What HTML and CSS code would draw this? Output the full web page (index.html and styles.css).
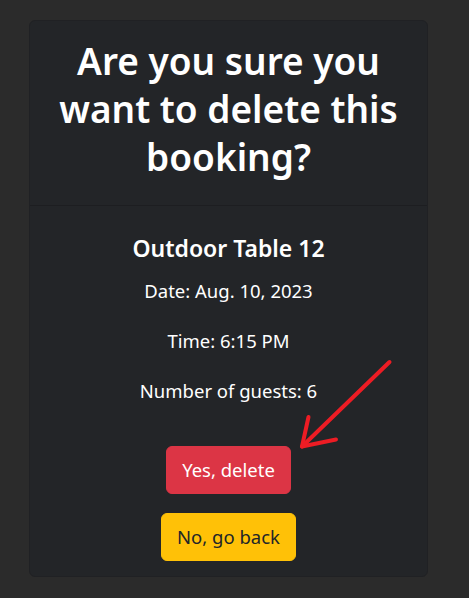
FILE: index.html
```html
<!DOCTYPE html>
<html lang="en">
<head>
<meta charset="utf-8">
<title>Delete booking</title>
<link rel="stylesheet" href="styles.css">
</head>
<body>
<div class="card">
  <div class="card-header">
    <h1 class="title">Are you sure you want to delete this booking?</h1>
  </div>
  <div class="card-body">
    <h4 class="table-name">Outdoor Table 12</h4>
    <p class="info">Date: Aug. 10, 2023</p>
    <p class="info">Time: 6:15 PM</p>
    <p class="info">Number of guests: 6</p>
    <div class="actions">
      <button class="btn btn-danger">Yes, delete</button>
      <button class="btn btn-warning">No, go back</button>
    </div>
  </div>
</div>
<svg class="arrow" width="469" height="598" viewBox="0 0 469 598">
  <g fill="none" stroke="#ed1c24" stroke-width="4" stroke-linecap="round" stroke-linejoin="round">
    <path d="M389.5 362 L302 446.5"/>
    <path d="M308.5 417 L302 446.5 L336 439.5"/>
  </g>
</svg>
</body>
</html>
```
FILE: styles.css
```css
html, body {
  margin: 0;
  padding: 0;
}
body {
  background: #2b2b2b;
  font-family: "Noto Sans", "Open Sans", sans-serif;
  color: #fff;
  padding-top: 20px;
  height: 578px;
  overflow: hidden;
}
.card {
  margin-left: 29px;
  width: 399px;
  background: #232528;
  border: 1px solid #202124;
  border-radius: 6px;
  box-sizing: border-box;
  text-align: center;
}
.card-header {
  padding: 16px 16px 16px;
  border-bottom: 1px solid #1d1e21;
}
.title {
  margin: 0 0 8px;
  font-size: 37px;
  line-height: 48px;
  font-weight: 600;
}
.card-body {
  padding: 25px 16px 15px;
}
.table-name {
  margin: 0 0 12px;
  font-size: 23px;
  line-height: 34px;
  font-weight: 600;
}
.info {
  margin: 0 0 22px;
  font-size: 18.5px;
  line-height: 28px;
}
.actions {
  display: flex;
  flex-direction: column;
  align-items: center;
  gap: 19px;
  margin-top: 41px;
}
.btn {
  font-family: inherit;
  font-size: 18.5px;
  line-height: 30px;
  padding: 8px 15px;
  border: 1px solid transparent;
  border-radius: 6px;
}
.btn-danger {
  background: #dc3545;
  border-color: #dc3545;
  color: #fff;
}
.btn-warning {
  background: #ffc107;
  border-color: #ffc107;
  color: #212529;
}
.arrow {
  position: absolute;
  left: 0;
  top: 0;
  pointer-events: none;
}
```
